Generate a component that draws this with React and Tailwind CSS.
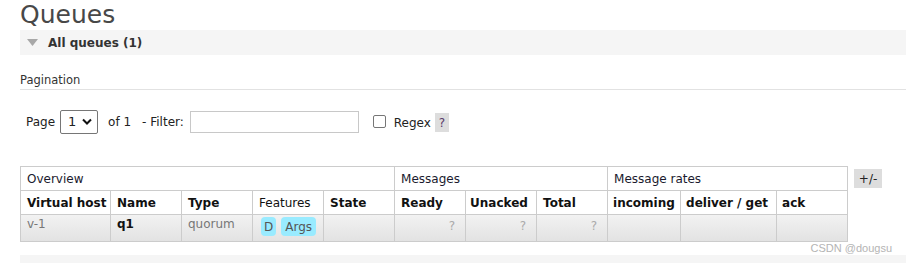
import React from "react";

const font = { fontFamily: '"DejaVu Sans", Verdana, sans-serif' };

function Q() {
  return <span className="text-[#aaaaaa]">?</span>;
}

export default function App() {
  return (
    <div className="w-[906px] h-[263px] overflow-hidden bg-white pl-5 text-[#222]" style={font}>
      <div className="h-[30px] text-[25px] leading-[30px] text-[#484848] font-normal">Queues</div>
      <div className="h-[25px] bg-[#f5f5f5] flex items-center pl-[7px] gap-[10px]">
        <svg width="11" height="8" viewBox="0 0 11 8"><polygon points="0,0 11,0 5.5,7" fill="#a8a8a8" /></svg>
        <span className="text-[12px] font-bold text-[#333]">All queues (1)</span>
      </div>
      <div className="mt-[17px] h-[17px] text-[11.5px] leading-[17px] text-[#333]">Pagination</div>
      <div className="h-[1px] bg-[#e2e2e2]" />
      <div className="mt-[19px] flex items-center h-[25px] pl-[6px] text-[12px] text-[#222]">
        <span>Page</span>
        <div className="ml-[5px] w-[38px] h-[24px] border border-[#767676] rounded-[2px] flex items-center justify-between pl-[7px] pr-[5px]">
          <span className="text-[13px]">1</span>
          <svg width="10" height="7" viewBox="0 0 10 7"><polyline points="1,1.5 5,5.5 9,1.5" fill="none" stroke="#111" strokeWidth="2" /></svg>
        </div>
        <span className="ml-[10px]">of 1</span>
        <span className="ml-[11px]">- Filter:</span>
        <div className="ml-[6px] w-[169px] h-[22px] border border-[#c8c8c8]" />
        <div className="ml-[14px] w-[13px] h-[13px] border border-[#767676] rounded-[2px]" />
        <span className="ml-[8px] mt-[2px]">Regex</span>
        <span className="ml-[4px] mt-[2px] w-[14px] h-[19px] bg-[#dddddd] flex items-center justify-center text-[#5a3a6a]">?</span>
      </div>
      <div className="mt-[32px] flex items-start">
        <table className="table-fixed border-collapse text-[12px] leading-[16px] w-[827px]">
          <colgroup>
            <col className="w-[90px]" />
            <col className="w-[71px]" />
            <col className="w-[71px]" />
            <col className="w-[71px]" />
            <col className="w-[71px]" />
            <col className="w-[71px]" />
            <col className="w-[71px]" />
            <col className="w-[71px]" />
            <col className="w-[73px]" />
            <col className="w-[96px]" />
            <col className="w-[71px]" />
          </colgroup>
          <thead>
            <tr className="h-[24px]">
              <th colSpan={5} className="border border-[#cccccc] text-left font-normal px-[6px] text-[#1a1a2e]">Overview</th>
              <th colSpan={3} className="border border-[#cccccc] text-left font-normal px-[6px] text-[#1a1a2e]">Messages</th>
              <th colSpan={3} className="border border-[#cccccc] text-left font-normal px-[6px] text-[#1a1a2e]">Message rates</th>
            </tr>
            <tr className="h-[24px] text-left">
              <th className="border border-[#cccccc] px-[6px] font-bold whitespace-nowrap text-[#111]">Virtual host</th>
              <th className="border border-[#cccccc] px-[6px] font-bold text-[#111]">Name</th>
              <th className="border border-[#cccccc] px-[6px] font-bold text-[#111]">Type</th>
              <th className="border border-[#cccccc] px-[6px] font-normal text-[#111]">Features</th>
              <th className="border border-[#cccccc] px-[6px] font-bold text-[#111]">State</th>
              <th className="border border-[#cccccc] px-[6px] font-bold text-[#111]">Ready</th>
              <th className="border border-[#cccccc] px-[4px] font-bold text-[#111]">Unacked</th>
              <th className="border border-[#cccccc] px-[6px] font-bold text-[#111]">Total</th>
              <th className="border border-[#cccccc] px-[5px] font-bold text-[#111] whitespace-nowrap">incoming</th>
              <th className="border border-[#cccccc] px-[5px] font-bold text-[#111] whitespace-nowrap">deliver / get</th>
              <th className="border border-[#cccccc] px-[5px] font-bold text-[#111]">ack</th>
            </tr>
          </thead>
          <tbody>
            <tr className="h-[27px] bg-gradient-to-b from-[#f2f2f2] to-[#e2e2e2] align-top">
              <td className="border border-[#cccccc] px-[6px] pt-[1px] text-[#777]">v-1</td>
              <td className="border border-[#cccccc] px-[6px] pt-[1px] font-bold text-[#111]">q1</td>
              <td className="border border-[#cccccc] px-[6px] pt-[1px] text-[#777]">quorum</td>
              <td className="border border-[#cccccc] px-[8px] pt-[2px]">
                <div className="flex gap-[5px]">
                  <span className="h-[19px] px-[3px] rounded-[4px] bg-[#99ebff] text-[#555] flex items-center">D</span>
                  <span className="h-[19px] px-[4px] rounded-[4px] bg-[#99ebff] text-[#555] flex items-center">Args</span>
                </div>
              </td>
              <td className="border border-[#cccccc]" />
              <td className="border border-[#cccccc] px-[10px] pt-[3px] text-right"><Q /></td>
              <td className="border border-[#cccccc] px-[10px] pt-[3px] text-right"><Q /></td>
              <td className="border border-[#cccccc] px-[10px] pt-[3px] text-right"><Q /></td>
              <td className="border border-[#cccccc]" />
              <td className="border border-[#cccccc]" />
              <td className="border border-[#cccccc]" />
            </tr>
          </tbody>
        </table>
        <span className="ml-[6px] mt-[3px] w-[28px] h-[19px] bg-[#dddddd] flex items-center justify-center text-[12px] text-[#222]">+/-</span>
      </div>
      <div className="h-[13px] relative">
        <span className="absolute right-[14px] top-0 text-[11px] leading-[12px] text-[#b4b4b4]" style={{ fontFamily: '"Liberation Sans", Arial, sans-serif' }}>CSDN @dougsu</span>
      </div>
      <div className="h-[25px] bg-[#f5f5f5] flex items-center pl-[7px] gap-[10px] pt-[12px]">
        <svg width="11" height="8" viewBox="0 0 11 8"><polygon points="0,0 11,0 5.5,7" fill="#a8a8a8" /></svg>
        <span className="text-[12px] font-bold text-[#333]">Add a new queue</span>
      </div>
    </div>
  );
}
